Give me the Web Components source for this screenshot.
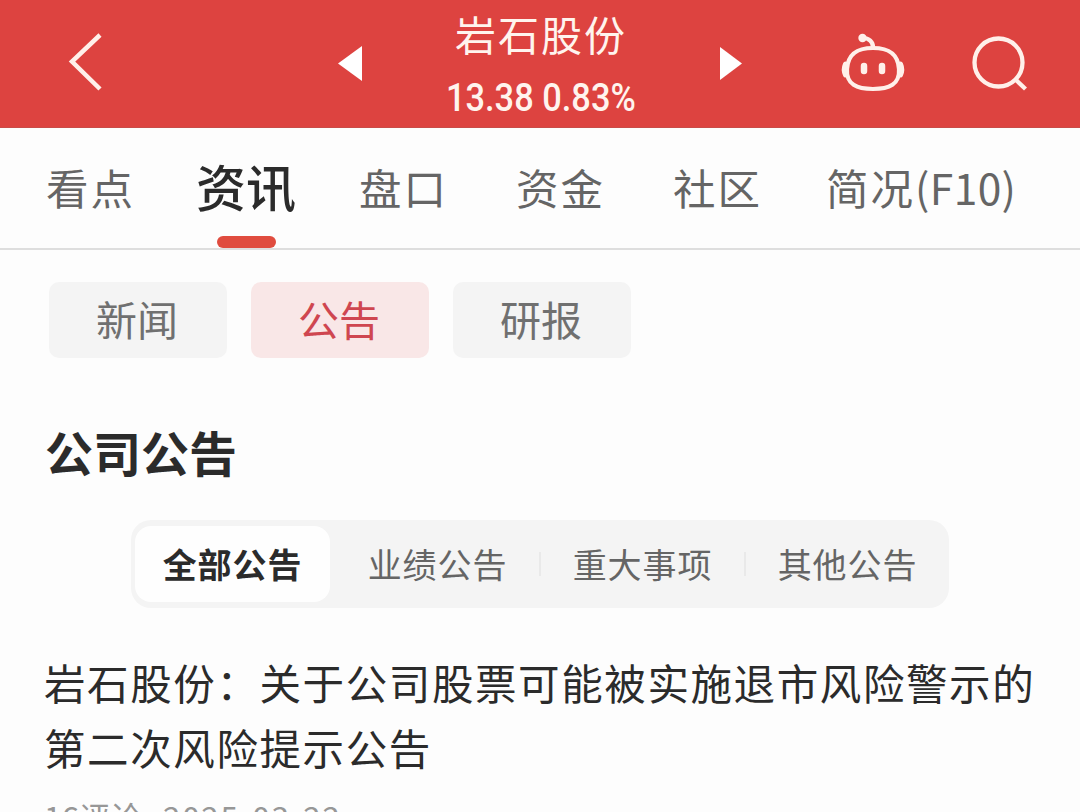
<!DOCTYPE html>
<html lang="zh-CN">
<head>
<meta charset="UTF-8">
<title>岩石股份</title>
<style>
    body {
        --red-color: #dd4340;
        --text-color: #2b2b2b;
        --gray-text-color: #656565;
        --gray-weak-color: #f4f4f4;
        margin: 0;
        height: 812px;
        overflow: hidden;
        background-color: #fdfdfd;
        color: var( --text-color );
        font-family: "Noto Sans CJK SC", sans-serif;
    }
</style>
</head>
<body>
<stock-page></stock-page>

<script>
const stockHeaderTemplate = document.createElement('template');
stockHeaderTemplate.innerHTML = `
    <style>
        :host {
            display: grid;
            grid-template-columns: 337px 406px 1fr;
            height: 128px;
            box-sizing: border-box;
            background-color: var( --red-color );
            border-bottom: 1px solid #c94c48;
            color: #fff4ee;
        }

        svg {
            display: block;
            fill: none;
            stroke: #fff0ea;
        }

        .back {
            padding: 32px 0 0 67px;
        }

        .stock {
            display: flex;
            justify-content: space-between;
        }

        .arrow {
            margin-top: 46px;
            fill: #fff;
            stroke: none;
        }

        .info {
            display: flex;
            flex-direction: column;
            align-items: center;
            white-space: nowrap;
        }

        .name {
            font-size: 41px;
            line-height: 60px;
            letter-spacing: 2px;
            margin-top: 3px;
        }

        .quote {
            font-family: Roboto, sans-serif;
            font-weight: 500;
            font-size: 38px;
            line-height: 44px;
            margin-top: 13px;
            transform: scaleX(0.905);
        }

        .actions {
            display: flex;
            justify-content: space-between;
            padding: 30px 50px 0 97px;
        }
    </style>
    <div class="back">
        <svg width="36" height="60" stroke-width="4.5"><path d="M33 3 L5 29.5 L33 57"/></svg>
    </div>
    <div class="stock">
        <svg class="arrow" width="25" height="36"><path d="M25 0 V35 L1 17.5 Z"/></svg>
        <div class="info">
            <div class="name"><slot name="name"></slot></div>
            <div class="quote"><slot name="quote"></slot></div>
        </div>
        <svg class="arrow" width="23" height="36"><path d="M0 1 V34 L22 17.5 Z"/></svg>
    </div>
    <div class="actions">
        <svg width="66" height="64" stroke-width="4.2" stroke-linecap="round">
            <path d="M33 18 C48 18 58 23 59 39 C60 54.5 49 59 33 59 C17 59 6 54.5 7 39 C8 23 18 18 33 18 Z"/>
            <path d="M33 17 C33 12 29 8 23 8"/>
            <circle cx="22.5" cy="8" r="4.2" fill="#fff0ea" stroke="none"/>
            <path d="M5.5 34 Q3 39.5 5.5 45 M60.5 34 Q63 39.5 60.5 45" stroke-width="5"/>
            <path d="M24 36 V41 M42 36 V41" stroke-width="6.5"/>
        </svg>
        <svg width="58" height="64" stroke-width="4.3">
            <circle cx="26.5" cy="32.5" r="24"/>
            <path d="M43.5 49.5 L53.5 59"/>
        </svg>
    </div>
`;

class StockHeader extends HTMLElement {
    constructor(){
        super();

        this.attachShadow( { mode:"open" } );
        this.shadowRoot.appendChild( stockHeaderTemplate.content.cloneNode( true ) );
    }
}

window.customElements.define( 'stock-header', StockHeader )

const stockTabTemplate = document.createElement('template');
stockTabTemplate.innerHTML = `
    <style>
        :host {
            display: flex;
            flex-direction: column;
            align-items: flex-start;
            height: 120px;
            color: var( --gray-text-color );
            font-size: 42.5px;
            letter-spacing: 2px;
            white-space: nowrap;
        }

        .label {
            height: 120px;
            line-height: 117px;
        }

        .bar {
            display: none;
            width: 59px;
            height: 12px;
            border-radius: 6px;
            background-color: #e04c3f;
            margin: -11px 0 0 21px;
        }

        :host([active]) {
            color: var( --text-color );
            font-weight: 500;
            font-size: 50px;
            letter-spacing: 0;
        }

        :host([active]) .label {
            line-height: 115px;
        }

        :host([active]) .bar {
            display: block;
        }
    </style>
    <div class="label"><slot></slot></div>
    <div class="bar"></div>
`;

class StockTab extends HTMLElement {
    constructor(){
        super();

        this.attachShadow( { mode:"open" } );
        this.shadowRoot.appendChild( stockTabTemplate.content.cloneNode( true ) );
    }
}

window.customElements.define( 'stock-tab', StockTab )

const stockTabsTemplate = document.createElement('template');
stockTabsTemplate.innerHTML = `
    <style>
        :host {
            display: grid;
            grid-template-columns: 150px 163px 157px 157px 153px auto;
            height: 122px;
            box-sizing: border-box;
            padding-left: 46px;
            border-bottom: 2px solid #dedede;
        }
    </style>
    <slot></slot>
`;

class StockTabs extends HTMLElement {
    constructor(){
        super();

        this.attachShadow( { mode:"open" } );
        this.shadowRoot.appendChild( stockTabsTemplate.content.cloneNode( true ) );
    }
}

window.customElements.define( 'stock-tabs', StockTabs )

const filterChipTemplate = document.createElement('template');
filterChipTemplate.innerHTML = `
    <style>
        :host {
            display: flex;
            justify-content: center;
            width: 178px;
            height: 76px;
            border-radius: 10px;
            background-color: var( --gray-weak-color );
            color: #707070;
            font-size: 41px;
            line-height: 72px;
            text-indent: -2px;
        }

        :host([active]) {
            background-color: #f9e7e7;
            color: #cf4650;
        }
    </style>
    <slot></slot>
`;

class FilterChip extends HTMLElement {
    constructor(){
        super();

        this.attachShadow( { mode:"open" } );
        this.shadowRoot.appendChild( filterChipTemplate.content.cloneNode( true ) );
    }
}

window.customElements.define( 'filter-chip', FilterChip )

const segmentItemTemplate = document.createElement('template');
segmentItemTemplate.innerHTML = `
    <style>
        :host {
            display: flex;
            justify-content: center;
            height: 76px;
            border-radius: 16px;
            color: var( --gray-text-color );
            font-size: 34px;
            letter-spacing: 0.9px;
            line-height: 75px;
        }

        :host([active]) {
            width: 195px;
            background-color: #fefefe;
            color: var( --text-color );
            font-weight: 700;
        }
    </style>
    <slot></slot>
`;

class SegmentItem extends HTMLElement {
    constructor(){
        super();

        this.attachShadow( { mode:"open" } );
        this.shadowRoot.appendChild( segmentItemTemplate.content.cloneNode( true ) );
    }
}

window.customElements.define( 'segment-item', SegmentItem )

const noticeItemTemplate = document.createElement('template');
noticeItemTemplate.innerHTML = `
    <style>
        :host {
            display: block;
        }

        .title {
            font-size: 41.5px;
            letter-spacing: 1.6px;
            line-height: 65px;
            white-space: nowrap;
        }

        .meta {
            display: flex;
            gap: 21px;
            margin-top: 13px;
            color: #979797;
            font-size: 31.5px;
            line-height: 46px;
        }
    </style>
    <div class="title"><slot></slot></div>
    <div class="meta">
        <slot name="comments"></slot>
        <slot name="date"></slot>
    </div>
`;

class NoticeItem extends HTMLElement {
    constructor(){
        super();

        this.attachShadow( { mode:"open" } );
        this.shadowRoot.appendChild( noticeItemTemplate.content.cloneNode( true ) );
    }
}

window.customElements.define( 'notice-item', NoticeItem )

const stockPageTemplate = document.createElement('template');
stockPageTemplate.innerHTML = `
    <style>
        :host {
            display: block;
        }

        .code {
            letter-spacing: 0.4px;
        }

        .chips {
            display: flex;
            gap: 24px;
            padding: 32px 0 0 49px;
        }

        h2 {
            margin: 57px 0 0 45px;
            font-size: 48px;
            font-weight: 700;
            line-height: 72px;
        }

        .segments {
            display: grid;
            grid-template-columns: 201px 1fr 2px 1fr 2px 1fr;
            align-items: center;
            width: 818px;
            height: 88px;
            box-sizing: border-box;
            padding: 0 0 0 4px;
            margin: 33px 0 0 131px;
            border-radius: 20px;
            background-color: var( --gray-weak-color );
        }

        .divisor {
            height: 24px;
            background-color: #e9e9e9;
        }

        notice-item {
            margin: 42px 0 0 44px;
        }

        .date {
            letter-spacing: 1.7px;
        }
    </style>
    <stock-header>
        <span slot="name">岩石股份</span>
        <span slot="quote">13.38 0.83%</span>
    </stock-header>
    <stock-tabs>
        <stock-tab>看点</stock-tab>
        <stock-tab active>资讯</stock-tab>
        <stock-tab>盘口</stock-tab>
        <stock-tab>资金</stock-tab>
        <stock-tab>社区</stock-tab>
        <stock-tab>简况<span class="code">(F10)</span></stock-tab>
    </stock-tabs>
    <div class="chips">
        <filter-chip>新闻</filter-chip>
        <filter-chip active>公告</filter-chip>
        <filter-chip>研报</filter-chip>
    </div>
    <h2>公司公告</h2>
    <div class="segments">
        <segment-item active>全部公告</segment-item>
        <segment-item>业绩公告</segment-item>
        <div class="divisor"></div>
        <segment-item>重大事项</segment-item>
        <div class="divisor"></div>
        <segment-item>其他公告</segment-item>
    </div>
    <notice-item>
        岩石股份：关于公司股票可能被实施退市风险警示的<br>第二次风险提示公告
        <span slot="comments">16评论</span>
        <span slot="date" class="date">2025-03-22</span>
    </notice-item>
`;

class StockPage extends HTMLElement {
    constructor(){
        super();

        this.attachShadow( { mode:"open" } );
        this.shadowRoot.appendChild( stockPageTemplate.content.cloneNode( true ) );
    }
}

window.customElements.define( 'stock-page', StockPage )
</script>
</body>
</html>
